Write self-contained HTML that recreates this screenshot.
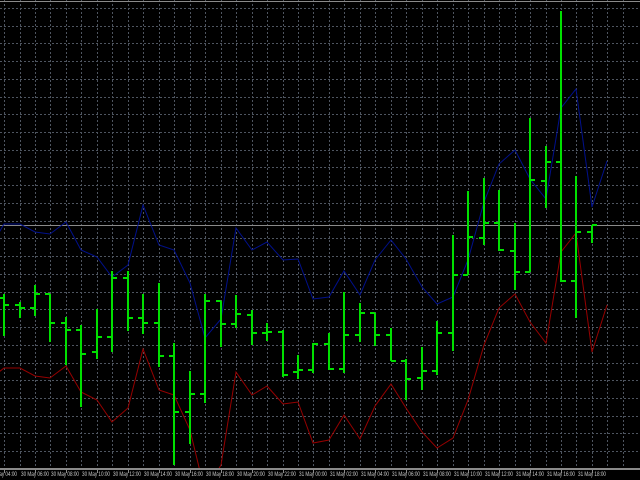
<!DOCTYPE html>
<html><head><meta charset="utf-8"><style>
html,body{margin:0;padding:0;background:#000;width:640px;height:480px;overflow:hidden}
svg{display:block}
text{font-family:"Liberation Sans",sans-serif;font-size:6px;fill:#c8c8c8}
</style></head><body>
<svg width="640" height="480" viewBox="0 0 640 480" xmlns="http://www.w3.org/2000/svg">
<rect width="640" height="480" fill="#000"/>
<defs><clipPath id="c"><rect x="0" y="0" width="640" height="468"/></clipPath></defs>
<g stroke="#4e5560" stroke-width="1" stroke-dasharray="2,2" shape-rendering="crispEdges">
<path d="M4.5,0V468M20.5,0V468M35.5,0V468M50.5,0V468M66.5,0V468M81.5,0V468M97.5,0V468M112.5,0V468M128.5,0V468M143.5,0V468M159.5,0V468M174.5,0V468M190.5,0V468M205.5,0V468M221.5,0V468M236.5,0V468M252.5,0V468M267.5,0V468M283.5,0V468M298.5,0V468M313.5,0V468M329.5,0V468M344.5,0V468M360.5,0V468M375.5,0V468M391.5,0V468M406.5,0V468M422.5,0V468M437.5,0V468M453.5,0V468M468.5,0V468M484.5,0V468M499.5,0V468M515.5,0V468M530.5,0V468M546.5,0V468M561.5,0V468M576.5,0V468M592.5,0V468M607.5,0V468M623.5,0V468"/>
<path d="M0,8.5H640M0,26.5H640M0,43.5H640M0,61.5H640M0,79.5H640M0,97.5H640M0,114.5H640M0,132.5H640M0,150.5H640M0,167.5H640M0,185.5H640M0,203.5H640M0,221.5H640M0,238.5H640M0,256.5H640M0,274.5H640M0,292.5H640M0,309.5H640M0,327.5H640M0,345.5H640M0,363.5H640M0,380.5H640M0,398.5H640M0,416.5H640M0,433.5H640M0,451.5H640"/>
</g>
<path d="M0,1.5H640M0,225.5H640" stroke="#8a8a8a" stroke-width="1" shape-rendering="crispEdges"/>
<g clip-path="url(#c)" fill="none">
<polyline stroke="#00108c" stroke-width="1" points="-11,250 4,224 20,224 35,232 50,234 66,222 81,250 97,257 112,277 128,265 143,205 159,245 174,250 190,283 205,338 221,319 236,228 252,250 267,242 283,260 298,259 313,299 329,297 344,271 360,295 375,260 391,240 406,259 422,287 437,304 453,297 468,260 484,202 499,164 515,150 530,179 546,199 561,108 576,89 592,207 607,161"/>
<polyline stroke="#960000" stroke-width="1" points="-11,380 4,368 20,368 35,376 50,378 66,366 81,392 97,400 112,422 128,408 143,349 159,390 174,395 190,430 205,492 221,465 236,372 252,395 267,386 283,404 298,402 313,443 329,440 344,415 360,439 375,406 391,384 406,408 422,432 437,448 453,438 468,400 484,345 499,308 515,294 530,322 546,343 561,252 576,233 592,352 607,305"/>
<path stroke="#00e000" stroke-width="2" shape-rendering="crispEdges" d="
M4,294V336M-1,298H4M4,305H9
M20,302V318M15,305H20M20,308H25
M35,285V316M30,308H35M35,294H40
M50,294V342M45,294H50M50,323H55
M66,317V365M61,323H66M66,330H71
M81,325V407M76,330H81M81,354H86
M97,309V359M92,352H97M97,337H102
M112,271V352M107,337H112M112,278H117
M128,271V331M123,278H128M128,318H133
M143,294V334M138,318H143M143,323H148
M159,283V367M154,323H159M159,356H164
M174,343V465M169,356H174M174,412H179
M190,371V444M185,412H190M190,394H195
M205,294V403M200,394H205M205,301H210
M221,301V347M216,301H221M221,324H226
M236,295V328M231,324H236M236,314H241
M252,310V345M247,315H252M252,333H257
M267,323V341M262,333H267M267,332H272
M283,330V377M278,332H283M283,375H288
M298,355V379M293,372H298M298,370H303
M313,343V373M308,370H313M313,344H318
M329,333V370M324,344H329M329,369H334
M344,292V373M339,369H344M344,335H349
M360,303V342M355,335H360M360,313H365
M375,313V346M370,313H375M375,335H380
M391,328V361M386,335H391M391,361H396
M406,359V400M401,361H406M406,379H411
M422,347V390M417,378H422M422,371H427
M437,321V375M432,371H437M437,333H442
M453,235V351M448,333H453M453,275H458
M468,191V275M463,275H468M468,237H473
M484,178V245M479,238H484M484,223H489
M499,190V251M494,223H499M499,250H504
M515,223V290M510,251H515M515,272H520
M530,118V272M525,272H530M530,180H535
M546,146V208M541,181H546M546,162H551
M561,11V282M556,162H561M561,281H566
M576,176V318M571,281H576M576,232H581
M592,225V243M587,232H592M592,225H597"/>
</g>
<rect x="0" y="468" width="640" height="2" fill="#8a8a8a"/>
<g stroke="#8a8a8a" stroke-width="1" shape-rendering="crispEdges">
<path d="M4.5,470V473M35.5,470V473M66.5,470V473M97.5,470V473M128.5,470V473M159.5,470V473M190.5,470V473M221.5,470V473M252.5,470V473M283.5,470V473M313.5,470V473M344.5,470V473M375.5,470V473M406.5,470V473M437.5,470V473M468.5,470V473M499.5,470V473M530.5,470V473M561.5,470V473M592.5,470V473"/>
</g>
<g>
<text x="-11" y="476" textLength="28" lengthAdjust="spacingAndGlyphs">30 May 04:00</text>
<text x="21" y="476" textLength="28" lengthAdjust="spacingAndGlyphs">30 May 06:00</text>
<text x="51" y="476" textLength="28" lengthAdjust="spacingAndGlyphs">30 May 08:00</text>
<text x="82" y="476" textLength="28" lengthAdjust="spacingAndGlyphs">30 May 10:00</text>
<text x="113" y="476" textLength="28" lengthAdjust="spacingAndGlyphs">30 May 12:00</text>
<text x="144" y="476" textLength="28" lengthAdjust="spacingAndGlyphs">30 May 14:00</text>
<text x="175" y="476" textLength="28" lengthAdjust="spacingAndGlyphs">30 May 16:00</text>
<text x="206" y="476" textLength="28" lengthAdjust="spacingAndGlyphs">30 May 18:00</text>
<text x="237" y="476" textLength="28" lengthAdjust="spacingAndGlyphs">30 May 20:00</text>
<text x="268" y="476" textLength="28" lengthAdjust="spacingAndGlyphs">30 May 22:00</text>
<text x="299" y="476" textLength="28" lengthAdjust="spacingAndGlyphs">31 May 00:00</text>
<text x="330" y="476" textLength="28" lengthAdjust="spacingAndGlyphs">31 May 02:00</text>
<text x="361" y="476" textLength="28" lengthAdjust="spacingAndGlyphs">31 May 04:00</text>
<text x="392" y="476" textLength="28" lengthAdjust="spacingAndGlyphs">31 May 06:00</text>
<text x="423" y="476" textLength="28" lengthAdjust="spacingAndGlyphs">31 May 08:00</text>
<text x="454" y="476" textLength="28" lengthAdjust="spacingAndGlyphs">31 May 10:00</text>
<text x="485" y="476" textLength="28" lengthAdjust="spacingAndGlyphs">31 May 12:00</text>
<text x="516" y="476" textLength="28" lengthAdjust="spacingAndGlyphs">31 May 14:00</text>
<text x="547" y="476" textLength="28" lengthAdjust="spacingAndGlyphs">31 May 16:00</text>
<text x="578" y="476" textLength="28" lengthAdjust="spacingAndGlyphs">31 May 18:00</text>
</g>
</svg>
</body></html>
